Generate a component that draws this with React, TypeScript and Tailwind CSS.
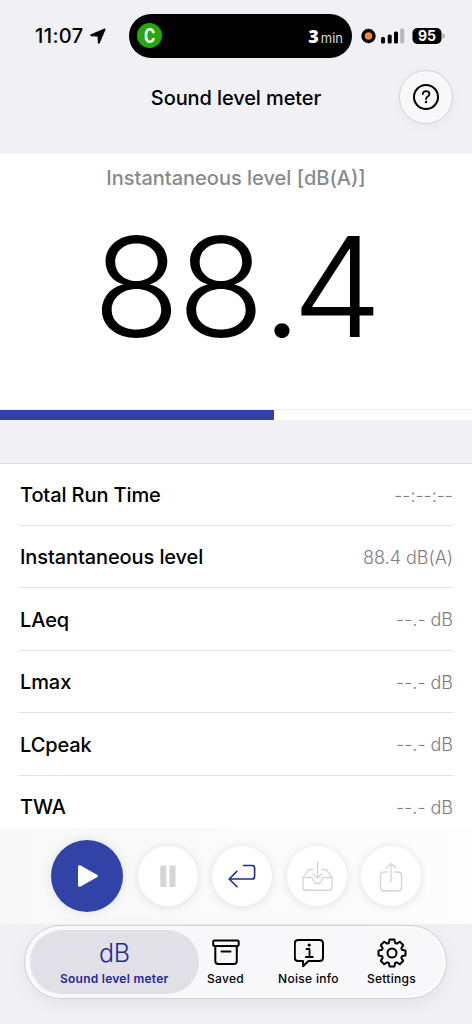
import React from "react";

interface Reading {
  label: string;
  value: string;
}

const readings: Reading[] = [
  { label: "Total Run Time", value: "--:--:--" },
  { label: "Instantaneous level", value: "88.4 dB(A)" },
  { label: "LAeq", value: "--.- dB" },
  { label: "Lmax", value: "--.- dB" },
  { label: "LCpeak", value: "--.- dB" },
  { label: "TWA", value: "--.- dB" },
];

export default function App() {
  return (
    <div className="flex h-[1024px] w-[472px] flex-col overflow-hidden bg-[#f1f0f5] font-['Inter','Liberation_Sans',sans-serif] text-black">
      <StatusBar />
      <Header />
      <LevelPanel level={88.4} progress={58} />
      <ReadingList />
      <Toolbar />
      <TabBar />
    </div>
  );
}

function StatusBar() {
  return (
    <div className="flex h-[71px] shrink-0 items-center">
      <div className="flex w-[129px] items-center pl-[35px]">
        <span className="w-[50px] text-[20px] font-medium tracking-[0.4px] whitespace-nowrap">
          11:07
        </span>
        <svg className="ml-[5px] h-4 w-4" viewBox="0 0 16 16">
          <path
            d="M14.600.6 1 6.200c-1.200.6-.9 2 .2 2.100l6 .3c.3 0 .4.1.4.4l.3 5.700c0 1.300 1.300 1.500 1.900.3L15.500 1.600c.4-.8-.1-1.300-.9-1Z"
            fill="black"
          />
        </svg>
      </div>
      <div className="flex h-[44px] w-[223px] items-center justify-between rounded-full bg-black pr-[9px] pl-2">
        <div className="flex h-[25px] w-[25px] items-center justify-center rounded-full bg-[#25a80f] text-white">
          <span className="scale-x-85 font-['Roboto',sans-serif] text-[20px] font-bold">C</span>
        </div>
        <div className="flex items-baseline gap-[2px] pt-[2px] text-white">
          <span className="font-['Open_Sans',sans-serif] text-[18px] leading-6 font-extrabold">3</span>
          <span className="text-[13px] text-[#ddd]">min</span>
        </div>
      </div>
      <svg className="ml-2 h-4 w-[85px]" viewBox="0 0 85 16">
        <circle cx="8.500" cy="8" r="5.500" fill="#ef8830" stroke="black" strokeWidth="3.400" />
        <rect x="21" y="9" width="4" height="6.500" rx="1.500" />
        <rect x="27.700" y="6.500" width="4" height="9" rx="1.500" />
        <rect x="34" y="3.500" width="4" height="12" rx="1.500" />
        <rect x="40.200" y="0.500" width="4" height="15" rx="1.500" fill="#b9b8bd" />
        <rect x="52.500" y="0" width="29" height="16" rx="5" />
        <path d="M82.500 5.200c1.700.6 2.400 1.700 2.400 2.800s-.7 2.200-2.400 2.800Z" fill="#aaa9ae" />
        <text
          x="67"
          y="13"
          textAnchor="middle"
          fill="white"
          fontSize="14"
          fontWeight="700"
        >
          95
        </text>
      </svg>
    </div>
  );
}

function Header() {
  return (
    <div className="grid h-[83px] shrink-0 grid-cols-[1fr_auto_1fr] items-start">
      <div />
      <h1 className="pt-[13px] text-[20px] leading-7 font-medium tracking-[-0.1px]">
        Sound level meter
      </h1>
      <button className="-mt-px mr-[19px] flex h-[54px] w-[54px] items-center justify-center justify-self-end rounded-full border border-[#d2d1d6] bg-[#f8f8fb] shadow-[0_3px_12px_rgba(0,0,0,0.04),inset_0_0_3px_white]">
        <svg className="h-[26px] w-[26px]" viewBox="0 0 26 26" fill="none" stroke="black">
          <circle cx="13" cy="13" r="12" strokeWidth="2" />
          <path
            d="M9.700 10.100c.2-2 1.500-3 3.400-3 1.900 0 3.300 1.100 3.300 2.800 0 1.300-.7 2-1.800 2.700-1.100.7-1.500 1.200-1.500 2.400"
            strokeWidth="1.800"
            strokeLinecap="round"
          />
          <circle cx="13" cy="18" r="1.200" fill="black" stroke="none" />
        </svg>
      </button>
    </div>
  );
}

function LevelPanel({ level, progress }: { level: number; progress: number }) {
  const [whole, fraction] = level.toFixed(1).split(".");
  return (
    <section className="flex h-[266px] shrink-0 flex-col bg-white">
      <h2 className="pt-[10px] text-center text-[20px] leading-7 font-medium text-[#89898d]">
        Instantaneous level [dB(A)]
      </h2>
      <div className="flex flex-1 scale-x-103 items-start justify-center pt-[25px] pl-[3px] text-[139px] leading-[140px] font-light">
        <span className="tracking-[-3px]">{whole}</span>
        <span className="tracking-[-9.500px]">.</span>
        <span>{fraction}</span>
      </div>
      <div className="h-[11px] border-t border-[#f0f0f4]">
        <div className="h-full bg-[#3143a7]" style={{ width: `${progress}%` }} />
      </div>
    </section>
  );
}

function ReadingList() {
  return (
    <section className="mt-[43px] h-[365px] shrink-0 overflow-hidden border-t border-[#dfdfe3] bg-white px-[19px]">
      {readings.map(({ label, value }) => (
        <div
          key={label}
          className="flex h-[62.5px] items-center justify-between border-b border-[#e2e2e5] pt-[2px] first:h-[61.5px]"
        >
          <span className="pl-px text-[20px] font-medium tracking-[-0.1px]">{label}</span>
          <span className="text-[18px] font-[350] tracking-[-0.03px] text-[#7d7d82]">{value}</span>
        </div>
      ))}
    </section>
  );
}

function Toolbar() {
  return (
    <div className="flex h-[96px] shrink-0 items-center gap-[14.5px] bg-linear-to-r from-[#f8f8f8] to-[#fdfdfe] pl-[51px]">
      <button className="flex h-[72px] w-[72px] items-center justify-center rounded-full bg-[#3143a7] shadow-[0_0_12px_rgba(0,0,0,0.1)]">
        <svg className="ml-[2px] h-6 w-[22px]" viewBox="0 0 22 24">
          <path
            d="M1 3v18c0 1.600 1.300 2.200 2.600 1.500L20 13.300c1.200-.7 1.200-1.900 0-2.600L3.600 1.500C2.300.8 1 1.400 1 3Z"
            fill="white"
          />
        </svg>
      </button>
      <RoundButton>
        <rect x="22.300" y="19.500" width="6" height="21.500" rx="1" fill="#d6d6d6" stroke="none" />
        <rect x="31.500" y="19.500" width="6" height="21.500" rx="1" fill="#d6d6d6" stroke="none" />
      </RoundButton>
      <RoundButton>
        <g stroke="#1f2b93" strokeWidth="1.600">
          <path d="M31.500 19.500h8.500q2.600 0 2.600 2.600v8.300q0 2.600-2.600 2.600H17.500" />
          <path d="m25 25.300-7.800 7.700 7.800 7.700" />
        </g>
      </RoundButton>
      <RoundButton>
        <path d="M26.500 23.500h-3.200q-1.500 0-2.400 1.200l-4.500 6.100q-.4.600-.4 1.500v9q0 3 3 3h23q3 0 3-3v-9q0-.9-.4-1.500l-4.500-6.100q-.9-1.200-2.400-1.200h-3.200" />
        <path d="M16.500 31.500h8q1.500 0 1.500 1.500a4.500 4.500 0 0 0 9 0q0-1.500 1.500-1.500h8" />
        <path d="M30.500 16v16M26 27.800l4.500 4.500 4.500-4.500" />
      </RoundButton>
      <RoundButton>
        <path d="M26.500 26h-3.500q-3.500 0-3.500 3.500v12q0 3.500 3.500 3.500h14q3.500 0 3.500-3.500v-12q0-3.500-3.500-3.500h-3.500" />
        <path d="M30 35.500V18M25.500 22l4.500-4.500 4.500 4.500" />
      </RoundButton>
    </div>
  );
}

function RoundButton({ children }: { children: React.ReactNode }) {
  return (
    <button className="h-[60px] w-[60px] rounded-full bg-white shadow-[0_1px_10px_rgba(0,0,0,0.11)]">
      <svg
        className="h-[60px] w-[60px]"
        viewBox="0 0 60 60"
        fill="none"
        stroke="#d6d6d6"
        strokeWidth="1.400"
        strokeLinecap="round"
        strokeLinejoin="round"
      >
        {children}
      </svg>
    </button>
  );
}

function TabBar() {
  return (
    <nav className="mt-[1px] ml-6 flex h-[74px] w-[423px] shrink-0 items-center rounded-full border border-[#d0cfd5] bg-[#f8f8fb] pl-[5px] shadow-[0_5px_18px_rgba(0,0,0,0.06),inset_0_0_5px_white]">
      <button className="flex h-[64px] w-[168.5px] flex-col items-center rounded-full bg-[#e1e0e7] text-[#1f2b93]">
        <span className="mt-[9px] text-[25px] leading-7 font-[350] tracking-[-0.3px]">dB</span>
        <span className="mt-[4px] text-[12px] leading-4 font-semibold tracking-[0.25px]">
          Sound level meter
        </span>
      </button>
      <Tab name="Saved" className="w-[54px]">
        <rect x="2.200" y="2.500" width="25.500" height="5.500" rx="1.300" />
        <path d="M4.300 8v15q0 3 3 3h15.500q3 0 3-3V8M10.500 13.500h9" />
      </Tab>
      <Tab name="Noise info" className="w-[112px]">
        <path d="M4.300 2h21.200q3.500 0 3.500 3.500v14q0 3.500-3.500 3.500H14.500l-5.500 5.200V23H4.300Q.8 23 .8 19.500v-14Q.8 2 4.300 2Z" />
        <path d="M12.500 11h3v8M11.800 19h7" strokeWidth="1.800" />
        <circle cx="15.200" cy="7" r="1.600" fill="black" stroke="none" />
      </Tab>
      <Tab name="Settings" className="w-[54px]">
        <circle cx="15" cy="15" r="4.500" />
        <path d="M11.800 5 12.600 1.500h4.800L18.200 5l1.600.7 3.050-1.940 3.390 3.390L24.300 10.200l.7 1.600 3.500.8v4.800l-3.500.8-.7 1.600 1.940 3.050-3.390 3.390L19.800 24.300l-1.600.7-.8 3.500h-4.800l-.8-3.500-1.600-.7-3.050 1.940-3.390-3.390L5.700 19.800 5 18.200l-3.500-.8v-4.800l3.500-.8.7-1.600L3.760 7.150l3.390-3.390L10.200 5.700Z" />
      </Tab>
    </nav>
  );
}

interface TabProps {
  name: string;
  className: string;
  children: React.ReactNode;
}
function Tab({ name, className, children }: TabProps) {
  return (
    <button className={"flex h-[64px] flex-col items-center " + className}>
      <svg
        className="mt-[8px] h-[30px] w-[30px]"
        viewBox="0 0 30 30"
        fill="none"
        stroke="black"
        strokeWidth="2"
        strokeLinecap="round"
        strokeLinejoin="round"
      >
        {children}
      </svg>
      <span className="mt-[3px] text-[12px] leading-4 font-medium tracking-[0.3px] whitespace-nowrap">
        {name}
      </span>
    </button>
  );
}
